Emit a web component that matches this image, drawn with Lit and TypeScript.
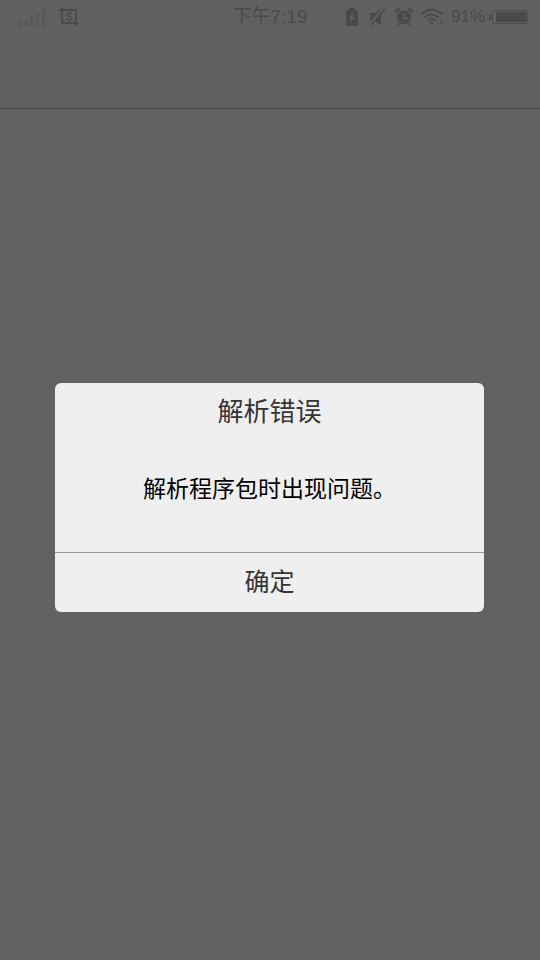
import { LitElement, html, css } from "lit";
import { customElement } from "lit/decorators.js";

@customElement("status-bar")
class StatusBar extends LitElement {
  static styles = css`
    :host {
      display: grid;
      grid-template-columns: 1fr auto 1fr;
      align-items: center;
      height: 34px;
      padding: 0 12px;
      color: #4a4a4a;
      font-family: "Liberation Sans", "Noto Sans CJK SC", sans-serif;
      font-size: 19px;
      line-height: 24px;
    }
    svg {
      display: block;
      flex: none;
    }
    .left,
    .right {
      display: flex;
      align-items: center;
    }
    .left {
      gap: 12px;
      padding-left: 6px;
    }
    .right {
      justify-content: flex-end;
      gap: 7px;
    }
    .signal {
      color: #585858;
    }
    .charge {
      display: flex;
      align-items: center;
      gap: 4px;
      font-size: 17px;
    }
  `;

  render() {
    return html`
      <div class="left">
        <svg class="signal" width="28" height="18" viewBox="0 0 28 18" fill="currentColor" aria-hidden="true">
          <path d="M1 14h3v4H1zM7 12h3v6H7zM12 8h3v10h-3zM18 5h3v13h-3zM24 1h3v17h-3z" />
        </svg>
        <svg width="21" height="18" viewBox="-1 0 21 18" fill="none" stroke="currentColor" aria-hidden="true">
          <path d="M3 0v15h17M0 2h17v16" stroke-width="2" />
          <path d="M12.5 6.500C12 4 8 4 7.800 6.500C7.700 9 12.700 8 12.600 10.300C12.400 13 8 13 7.500 10.300" stroke-width="1.500" />
        </svg>
      </div>
      <time>下午7:19</time>
      <div class="right">
        <svg width="16" height="18" viewBox="0 0 16 18" aria-hidden="true">
          <path d="M4 0h6v2h2q1 0 1 1v14q0 1-1 1H2q-1 0-1-1V3q0-1 1-1h2z" fill="currentColor" />
          <path d="M7.800 5L4 10.500h2.500L6 15l4-6H7.300z" fill="#606060" />
        </svg>
        <svg width="20" height="18" viewBox="-1 0 20 18" aria-hidden="true">
          <path d="M1 5h5l6-4v16l-6-4H1z" fill="currentColor" />
          <path d="M1 17L15 0" stroke="#606060" stroke-width="3" />
          <path d="M2 17L16 1" stroke="currentColor" stroke-width="1.500" />
        </svg>
        <svg width="18" height="18" viewBox="0 0 18 18" fill="none" aria-hidden="true">
          <circle cx="9" cy="9.500" r="7" fill="currentColor" />
          <path d="M1 5Q1 1 5 1.500M13 1.500Q17 1 17 5M4.500 15L3 17M13.500 15L15 17" stroke="currentColor" stroke-width="2" />
          <path d="M9 5v5h4" stroke="#606060" stroke-width="1.500" />
        </svg>
        <svg width="24" height="18" viewBox="0 0 24 18" fill="none" stroke="currentColor" stroke-width="2" aria-hidden="true">
          <path d="M1 6Q11.500-2.500 22 6M4.500 9.500Q11.500 3.500 18.500 9.500M8 12.500Q11.500 9.500 15 12.500" />
          <path d="M9 14.500Q11.500 12.500 14 14.500L11.500 17z" fill="currentColor" stroke="none" />
          <path d="M20 14.500h3" />
        </svg>
        <span class="charge">
          <span>91%</span>
          <svg width="39" height="16" viewBox="0 0 39 16" aria-hidden="true">
            <path d="M1 6v5" stroke="currentColor" stroke-width="2" />
            <rect x="3.500" y="1.500" width="35" height="13" rx="2" fill="none" stroke="currentColor" />
            <rect x="7" y="3" width="30" height="10" fill="currentColor" />
          </svg>
        </span>
      </div>
    `;
  }
}

@customElement("alert-dialog")
class AlertDialog extends LitElement {
  static styles = css`
    :host {
      display: block;
      width: 100%;
      max-width: 429px;
      border-radius: 6px;
      overflow: hidden;
      background: #efefef;
      color: #000;
      text-align: center;
    }
    h1,
    p {
      margin: 0;
      font-weight: 400;
    }
    h1 {
      padding: 7px 16px 9px;
      font-size: 26px;
      line-height: 40px;
      color: #353535;
    }
    p {
      padding: 28px 16px 45px;
      font-size: 23px;
      line-height: 40px;
    }
    button {
      display: block;
      width: 100%;
      padding: 7px 16px 12px;
      border: 0;
      border-top: 1px solid #999;
      background: none;
      color: #353535;
      font: inherit;
      font-size: 25px;
      line-height: 40px;
    }
  `;

  render() {
    return html`
      <section role="alertdialog" aria-labelledby="title" aria-describedby="message">
        <h1 id="title">解析错误</h1>
        <p id="message">解析程序包时出现问题。</p>
        <button type="button">确定</button>
      </section>
    `;
  }
}

@customElement("app-root")
class AppRoot extends LitElement {
  static styles = css`
    :host {
      display: flex;
      flex-direction: column;
      min-height: 100vh;
      background: #626262;
      font-family: "Noto Sans CJK SC", sans-serif;
    }
    header {
      padding-bottom: 74px;
      border-bottom: 1px solid #414141;
      background: #606060;
    }
    .overlay {
      position: absolute;
      inset: 0;
      display: grid;
      place-items: center;
      padding: 35px 10% 0;
    }
    alert-dialog {
      margin-right: 1px;
    }
  `;

  render() {
    return html`
      <header><status-bar></status-bar></header>
      <div class="overlay"><alert-dialog></alert-dialog></div>
    `;
  }
}
